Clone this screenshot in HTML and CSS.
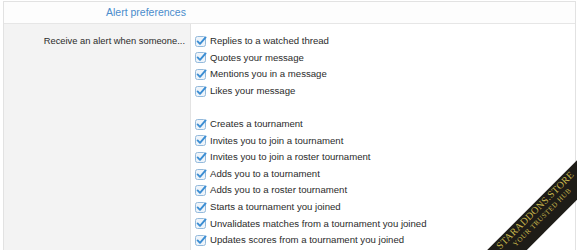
FILE: index.html
```html
<!DOCTYPE html>
<html>
<head>
<meta charset="utf-8">
<link rel="stylesheet" href="styles.css">
</head>
<body>
<div class="panel">
  <h3 class="heading">Alert preferences</h3>
  <div class="row">
    <div class="label">Receive an alert when someone...</div>
    <ul class="options">
      <li><svg class="cb" viewBox="0 0 12 12"><rect x="0.5" y="1.5" width="10" height="10" rx="2"/><path d="M2.6 6.4 L5 8.8 L10.6 2.4"/></svg>Replies to a watched thread</li>
      <li><svg class="cb" viewBox="0 0 12 12"><rect x="0.5" y="1.5" width="10" height="10" rx="2"/><path d="M2.6 6.4 L5 8.8 L10.6 2.4"/></svg>Quotes your message</li>
      <li><svg class="cb" viewBox="0 0 12 12"><rect x="0.5" y="1.5" width="10" height="10" rx="2"/><path d="M2.6 6.4 L5 8.8 L10.6 2.4"/></svg>Mentions you in a message</li>
      <li><svg class="cb" viewBox="0 0 12 12"><rect x="0.5" y="1.5" width="10" height="10" rx="2"/><path d="M2.6 6.4 L5 8.8 L10.6 2.4"/></svg>Likes your message</li>
      <li class="spacer"></li>
      <li><svg class="cb" viewBox="0 0 12 12"><rect x="0.5" y="1.5" width="10" height="10" rx="2"/><path d="M2.6 6.4 L5 8.8 L10.6 2.4"/></svg>Creates a tournament</li>
      <li><svg class="cb" viewBox="0 0 12 12"><rect x="0.5" y="1.5" width="10" height="10" rx="2"/><path d="M2.6 6.4 L5 8.8 L10.6 2.4"/></svg>Invites you to join a tournament</li>
      <li><svg class="cb" viewBox="0 0 12 12"><rect x="0.5" y="1.5" width="10" height="10" rx="2"/><path d="M2.6 6.4 L5 8.8 L10.6 2.4"/></svg>Invites you to join a roster tournament</li>
      <li><svg class="cb" viewBox="0 0 12 12"><rect x="0.5" y="1.5" width="10" height="10" rx="2"/><path d="M2.6 6.4 L5 8.8 L10.6 2.4"/></svg>Adds you to a tournament</li>
      <li><svg class="cb" viewBox="0 0 12 12"><rect x="0.5" y="1.5" width="10" height="10" rx="2"/><path d="M2.6 6.4 L5 8.8 L10.6 2.4"/></svg>Adds you to a roster tournament</li>
      <li><svg class="cb" viewBox="0 0 12 12"><rect x="0.5" y="1.5" width="10" height="10" rx="2"/><path d="M2.6 6.4 L5 8.8 L10.6 2.4"/></svg>Starts a tournament you joined</li>
      <li><svg class="cb" viewBox="0 0 12 12"><rect x="0.5" y="1.5" width="10" height="10" rx="2"/><path d="M2.6 6.4 L5 8.8 L10.6 2.4"/></svg>Unvalidates matches from a tournament you joined</li>
      <li><svg class="cb" viewBox="0 0 12 12"><rect x="0.5" y="1.5" width="10" height="10" rx="2"/><path d="M2.6 6.4 L5 8.8 L10.6 2.4"/></svg>Updates scores from a tournament you joined</li>
    </ul>
  </div>
</div>
<div class="ribbon">
  <span class="r1">STARADDONS.STORE</span>
  <span class="r2">YOUR TRUSTED HUB</span>
</div>
</body>
</html>
```
FILE: styles.css
```css
html, body {
  margin: 0;
  padding: 0;
  background: #fff;
  overflow: hidden;
}
body {
  width: 577px;
  height: 250px;
  position: relative;
  font-family: "Liberation Sans", Arial, sans-serif;
  color: #2b2b2b;
}
.panel {
  margin: 1px 1px 0 3px;
  border: 1px solid #e2e2e2;
  border-bottom: none;
  height: 260px;
  display: flex;
  flex-direction: column;
}
.heading {
  margin: 0;
  height: 21px;
  line-height: 21px;
  font-size: 10.5px;
  font-weight: normal;
  color: #4a8ccc;
  padding-left: 102px;
  background: #fdfdfd;
  border-bottom: 1px solid #e6e6e6;
}
.row {
  display: flex;
  flex: 1;
}
.label {
  width: 187px;
  background: #f3f3f3;
  border-right: 1px solid #e3e3e3;
  text-align: right;
  font-size: 9.35px;
  line-height: 16.6px;
  padding-top: 9px;
  padding-right: 5px;
  box-sizing: border-box;
}
.options {
  list-style: none;
  margin: 0;
  padding: 9px 0 0 4px;
  font-size: 9.6px;
  line-height: 16.6px;
}
.options li {
  display: flex;
  align-items: center;
  height: 16.6px;
}
.cb {
  width: 12px;
  height: 12px;
  margin-right: 3px;
  margin-top: -1px;
  flex: none;
}
.cb rect {
  fill: #eef4fa;
  stroke: #93b9db;
  stroke-width: 1;
}
.cb path {
  fill: none;
  stroke: #3a8dd3;
  stroke-width: 1.9;
  stroke-linecap: round;
  stroke-linejoin: round;
}
.ribbon {
  position: absolute;
  left: 431px;
  top: 202px;
  width: 220px;
  height: 28px;
  background: #1e1c17;
  transform: rotate(-45deg);
  transform-origin: 50% 50%;
  display: flex;
  flex-direction: column;
  align-items: center;
  justify-content: flex-start;
  padding-top: 1px;
  box-sizing: border-box;
  font-family: "Liberation Serif", serif;
  color: #c8b74c;
  line-height: 1;
}
.r1 {
  font-size: 10px;
  line-height: 10px;
  letter-spacing: 0.3px;
}
.r2 {
  font-size: 7px;
  line-height: 7px;
  letter-spacing: 0.6px;
  margin-top: 2px;
}
```
